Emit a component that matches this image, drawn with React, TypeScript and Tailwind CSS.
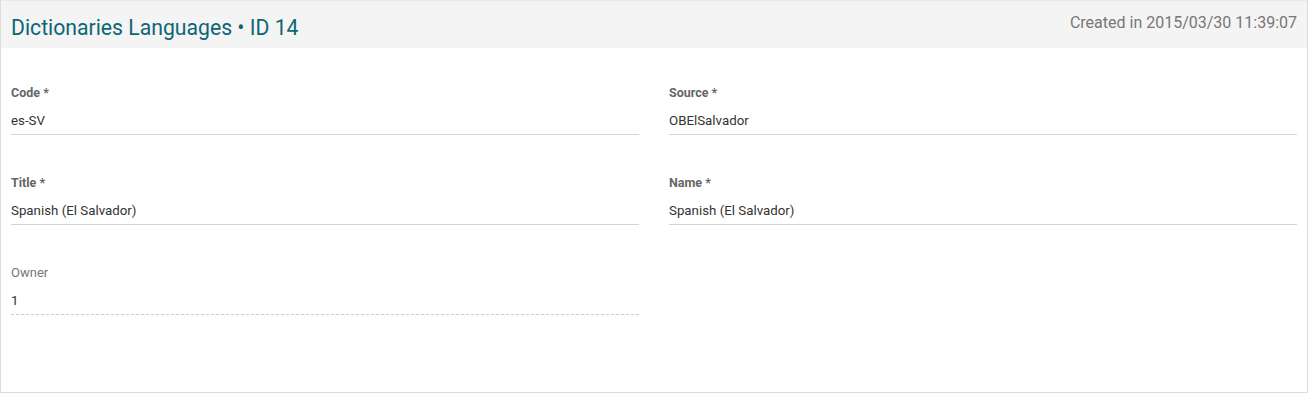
const fields = [
  { label: "Code *", value: "es-SV", required: true },
  { label: "Source *", value: "OBElSalvador", required: true },
  { label: "Title *", value: "Spanish (El Salvador)", required: true },
  { label: "Name *", value: "Spanish (El Salvador)", required: true },
  { label: "Owner", value: "1", required: false },
];

function Field({ label, value, required }: { label: string; value: string; required: boolean }) {
  return (
    <div>
      <div
        className={
          required
            ? "h-[14px] text-[12.5px] leading-[14px] font-bold text-[#666]"
            : "h-[14px] text-[13px] leading-[14px] text-[#777]"
        }
      >
        {label}
      </div>
      <div
        className={
          required
            ? "mt-[11px] pb-[3px] text-[13.3px] leading-[20px] text-[#333] border-b border-[#d4d4d4]"
            : "mt-[11px] pb-[3px] text-[13.3px] leading-[20px] text-[#333] border-b border-dashed border-[#ccc]"
        }
      >
        {value}
      </div>
    </div>
  );
}

export default function App() {
  return (
    <div className="h-[394px] w-[1308px] bg-white font-['Roboto',sans-serif]">
      <div className="h-[393px] border border-[#dcdcdc] border-t-[#e8e8e8] bg-white">
        <div className="flex h-[47px] items-start justify-between bg-[#f4f4f4] px-[10px]">
          <h1 className="pt-[15px] text-[21.2px] leading-[24px] text-[#0d6677]">
            Dictionaries Languages • ID 14
          </h1>
          <span className="pt-[12px] text-[16px] leading-[20px] text-[#777]">
            Created in 2015/03/30 11:39:07
          </span>
        </div>
        <div className="grid grid-cols-2 gap-x-[30px] gap-y-[41px] px-[10px] pt-[38px]">
          {fields.map((f) => (
            <Field key={f.label} {...f} />
          ))}
        </div>
      </div>
    </div>
  );
}
